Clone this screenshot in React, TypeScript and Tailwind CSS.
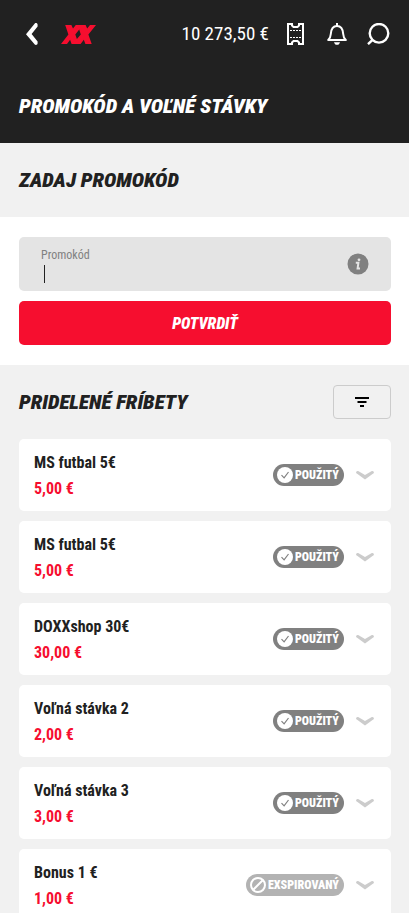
import type { ReactNode } from 'react';

type FreebetStatus = 'used' | 'expired';

interface Freebet {
  id: number;
  name: string;
  amount: string;
  status: FreebetStatus;
}

const FREEBETS: Freebet[] = [
  { id: 1, name: 'MS futbal 5€', amount: '5,00 €', status: 'used' },
  { id: 2, name: 'MS futbal 5€', amount: '5,00 €', status: 'used' },
  { id: 3, name: 'DOXXshop 30€', amount: '30,00 €', status: 'used' },
  { id: 4, name: 'Voľná stávka 2', amount: '2,00 €', status: 'used' },
  { id: 5, name: 'Voľná stávka 3', amount: '3,00 €', status: 'used' },
  { id: 6, name: 'Bonus 1 €', amount: '1,00 €', status: 'expired' },
];

function BackIcon() {
  return (
    <svg width="12" height="22" viewBox="0 0 12 22" fill="#fff" aria-hidden="true">
      <path d="M9 .2c1.400-.4 2.600.2 2.600 1.600v1.600L5.600 11l6 7.600v1.600c0 1.400-1.200 2-2.600 1.600L0 11.200z" />
    </svg>
  );
}

function Logo() {
  return (
    <svg width="35" height="19" viewBox="0 0 35 19" fill="#f60e2f" aria-hidden="true">
      <path
        fillRule="evenodd"
        d="M4.200 0h6.200l1.600 3.600L14.800 0h9.800l1.600 3.600L29 0h6l-7.600 9.400L30.700 19h-6.300l-1.600-4.200L19.600 19h-9l-1.500-4.200L6 19H0l7.400-9.600zM18.200 4.600 14.300 9.500l1.600 4.600 3.900-4.600z"
      />
    </svg>
  );
}

function TicketIcon() {
  return (
    <svg width="17" height="22" viewBox="0 0 17 22" fill="none" stroke="#fff" aria-hidden="true">
      <path
        strokeWidth="2"
        d="M1 1h4v1.500L6.500 4h4L12 2.500V1h4v20h-4v-1.500L10.500 18h-4L5 19.500V21H1z"
      />
      <path strokeWidth="1" strokeDasharray="2 1" d="M3 7.500h11M3 14.500h11" />
    </svg>
  );
}

function BellIcon() {
  return (
    <svg width="20" height="22" viewBox="0 0 20 22" fill="none" stroke="#fff" strokeWidth="2" aria-hidden="true">
      <path
        strokeLinejoin="round"
        d="M1.200 17c1.600-1.400 2.400-3 2.600-6 .3-4.800 1.800-8 6.200-8s5.900 3.200 6.200 8c.2 3 1 4.600 2.600 6z"
      />
      <path d="M10 0v3" />
      <path fill="#fff" stroke="none" d="M7 19.200h6c-.4 1.600-1.500 2.600-3 2.600s-2.600-1-3-2.600z" />
    </svg>
  );
}

function SearchIcon() {
  return (
    <svg width="23" height="22" viewBox="0 0 23 22" fill="none" stroke="#fff" strokeWidth="2.400" aria-hidden="true">
      <circle cx="12" cy="10.300" r="9.300" />
      <path d="M5.800 16.600 1 21.200" />
    </svg>
  );
}

function FilterIcon() {
  return (
    <svg width="14" height="10" viewBox="0 0 14 10" fill="#000" aria-hidden="true">
      <path d="M0 0h14v2H0zM2.500 4h9v2h-9zM5 8h4v2H5z" />
    </svg>
  );
}

function InfoIcon() {
  return (
    <svg width="22" height="22" viewBox="0 0 22 22" aria-hidden="true">
      <circle cx="11" cy="11" r="10.500" fill="#808080" />
      <circle cx="12" cy="6.800" r="1.400" fill="#e4e4e4" />
      <path fill="none" stroke="#e4e4e4" strokeWidth="2" d="M8.800 9.800h2.600l-.8 5.600H13" />
    </svg>
  );
}

function ChevronIcon() {
  return (
    <svg width="18" height="10" viewBox="0 0 18 10" fill="#ccc" aria-hidden="true">
      <path d="M.3 1.700C.8 1 1.800.8 2.600 1.300L9 5.100l6.400-3.800c.8-.5 1.800-.3 2.300.4.400.7.200 1.400-.5 1.900L9 9.500.8 3.600C.100 3.100-.1 2.400.3 1.700z" />
    </svg>
  );
}

function StatusBadge({ status }: { status: FreebetStatus }) {
  if (status === 'expired') {
    return (
      <span className="flex h-[22px] items-center gap-0.5 rounded-full bg-[#b3b3b3] pr-[5px] pl-1 text-xs font-black text-white">
        <svg width="16" height="16" viewBox="0 0 16 16" fill="none" stroke="#fff" strokeWidth="2" aria-hidden="true">
          <circle cx="8" cy="8" r="7" />
          <path d="m3.500 12.500 9-9" />
        </svg>
        EXSPIROVANÝ
      </span>
    );
  }
  return (
    <span className="flex h-[22px] items-center gap-0.5 rounded-full bg-[#808080] pr-[5px] pl-1 text-xs font-black text-white">
      <svg width="16" height="16" viewBox="0 0 16 16" fill="none" aria-hidden="true">
        <circle cx="8" cy="8" r="8" fill="#fff" />
        <path stroke="#808080" strokeWidth="1.200" d="m4.500 8.200 2.600 2.600L11.500 5" />
      </svg>
      POUŽITÝ
    </span>
  );
}

function SectionTitle({ children }: { children: ReactNode }) {
  return <h2 className="text-[21px] leading-[34px] font-black italic">{children}</h2>;
}

function FreebetCard({ bet }: { bet: Freebet }) {
  return (
    <li className="flex h-[72px] items-center rounded-[5px] bg-white pr-[17px] pl-[15px]">
      <div className="grow pt-0.5 text-base leading-[26px] font-bold">
        <p>{bet.name}</p>
        <p className="text-[#f60e2f]">{bet.amount}</p>
      </div>
      <StatusBadge status={bet.status} />
      <button type="button" aria-label="Zobraziť detail" className="ml-3">
        <ChevronIcon />
      </button>
    </li>
  );
}

export default function App() {
  return (
    <div className="min-h-screen bg-[#f1f1f1] font-['Roboto_Condensed','Open_Sans_Condensed',sans-serif] text-[#212121]">
      <header className="bg-[#212121] px-[19px] text-white">
        <div className="flex h-[68px] items-center">
          <button type="button" aria-label="Späť" className="ml-[7px]">
            <BackIcon />
          </button>
          <a href="#" aria-label="Domov" className="ml-[23px]">
            <Logo />
          </a>
          <span className="ml-auto text-[19px]">10 273,50 €</span>
          <a href="#" aria-label="Tikety" className="ml-[18px]">
            <TicketIcon />
          </a>
          <button type="button" aria-label="Upozornenia" className="ml-[23px]">
            <BellIcon />
          </button>
          <button type="button" aria-label="Hľadať" className="ml-5">
            <SearchIcon />
          </button>
        </div>
        <h1 className="pt-[21px] pb-5 text-[21px] leading-[34px] font-black italic">PROMOKÓD A VOĽNÉ STÁVKY</h1>
      </header>

      <div className="py-5 pr-[18px] pl-[19px]">
        <SectionTitle>ZADAJ PROMOKÓD</SectionTitle>
      </div>

      <form className="flex flex-col gap-2.5 bg-white py-5 pr-[18px] pl-[19px]">
        <div className="flex h-[54px] items-center rounded-[5px] bg-[#e4e4e4] px-[22px]">
          <div className="flex grow flex-col pt-0.5">
            <label htmlFor="promo" className="text-xs leading-4 text-[#808080]">
              Promokód
            </label>
            <div className="flex items-center pt-0.5 pl-[3px]">
              <span className="h-[18px] w-px bg-[#212121]" />
              <input id="promo" className="h-[18px] w-full bg-transparent text-base caret-transparent outline-none" />
            </div>
          </div>
          <button type="button" aria-label="Informácie">
            <InfoIcon />
          </button>
        </div>
        <button type="submit" className="h-11 rounded-[5px] bg-[#f60e2f] pt-0.5 text-base font-black text-white italic">
          POTVRDIŤ
        </button>
      </form>

      <section className="pt-5 pr-[18px] pb-5 pl-[19px]">
        <div className="flex items-center justify-between">
          <SectionTitle>PRIDELENÉ FRÍBETY</SectionTitle>
          <button
            type="button"
            aria-label="Filter"
            className="flex h-[34px] w-[58px] items-center justify-center rounded-[4px] border border-[#ccc]"
          >
            <FilterIcon />
          </button>
        </div>
        <ul className="mt-5 flex flex-col gap-2.5">
          {FREEBETS.map((bet) => (
            <FreebetCard key={bet.id} bet={bet} />
          ))}
        </ul>
      </section>
    </div>
  );
}
